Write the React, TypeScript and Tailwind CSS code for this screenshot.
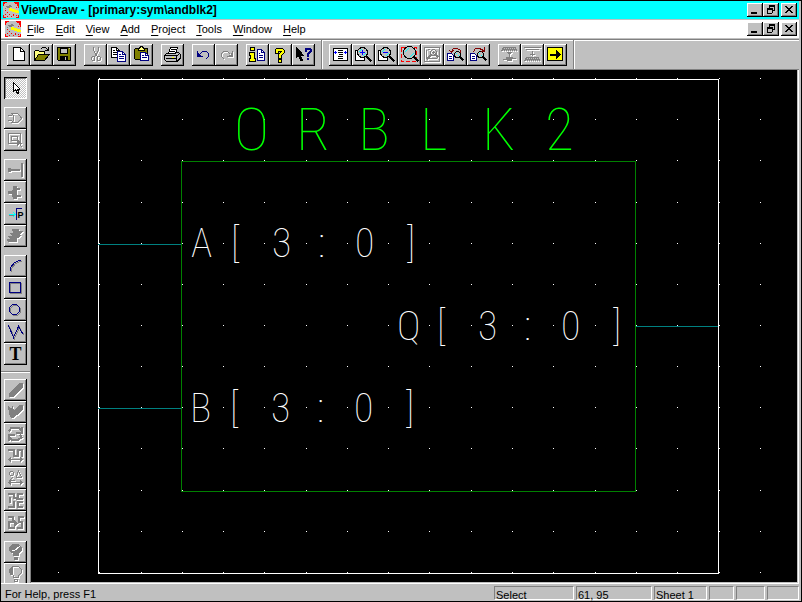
import type { ReactNode } from "react";

/* ---------- icon helpers ---------- */

function Glyph({ children }: { children: ReactNode }) {
  return (
    <svg
      viewBox="-0.5 -0.5 23 22"
      width={23}
      height={22}
      className="block"
      fill="none"
      stroke="#000"
      strokeLinecap="square"
      shapeRendering="crispEdges"
      aria-hidden="true"
    >
      {children}
    </svg>
  );
}

/* Disabled look: a white copy one pixel down-right of the grey drawing. */
function Etched({ children }: { children: ReactNode }) {
  return (
    <Glyph>
      <g transform="translate(1 1)" color="#fff" stroke="currentColor">{children}</g>
      <g color="#808080" stroke="currentColor">{children}</g>
    </Glyph>
  );
}

const Doc = ({ x, y, ink = "#000", line = "#000" }: { x: number; y: number; ink?: string; line?: string }) => (
  <g transform={`translate(${x} ${y})`}>
    <path d="M0 0H5L8 3V10H0Z" fill="#fff" stroke={ink} />
    <path d="M5 0V3H8" stroke={ink} />
    <path d="M2 3H3M2 5H6M2 7H6" stroke={line} />
  </g>
);

const Lens = ({ x, y, r = 5 }: { x: number; y: number; r?: number }) => (
  <g transform={`translate(${x} ${y})`}>
    <path d={r > 3 ? "M4 4L8 8" : "M3 3L5 5"} stroke="#000" strokeWidth="2" />
    <circle r={r} fill="#c0c0c0" stroke="#000" />
    <path d={`M${-r + 2} -1L-1 ${-r + 2}M1 ${r - 2}L${r - 2} 1`} stroke="#0ff" />
  </g>
);

const icons = {
  new: (
    <Glyph>
      <path d="M6 3H13L17 7V16H6Z" fill="#fff" />
      <path d="M13 3V7H17" />
    </Glyph>
  ),
  open: (
    <Glyph>
      <path d="M4 16V7L5 6H8L9 7H14V10" fill="#ffff80" />
      <path d="M4 16L8 10H19L14 16Z" fill="#808000" />
      <path d="M11 4L12 3H15L18 6M18 3V6H15" />
    </Glyph>
  ),
  save: (
    <Glyph>
      <path d="M4 3H17V16H5L4 15Z" fill="#808000" />
      <path d="M7 4H14V9H7Z" fill="#c0c0c0" />
      <path d="M7 12H14V15H7Z" fill="#000" />
      <path d="M12 13V15" stroke="#c0c0c0" />
      <path d="M16 4V4" stroke="#c0c0c0" />
    </Glyph>
  ),
  cut: (
    <Etched>
      <path d="M9 3V6L13 12M14 3V6L10 12M11 9V10" />
      <path d="M8 12H10V16H8L7 15V13ZM13 12H15L16 13V15L15 16H13Z" />
    </Etched>
  ),
  copy: (
    <Glyph>
      <Doc x={4} y={3} />
      <Doc x={10} y={7} ink="#000080" line="#000080" />
    </Glyph>
  ),
  paste: (
    <Glyph>
      <path d="M5 4H17V15H5L4 14V5Z" fill="#808000" />
      <path d="M8 6V4H9L10 2H12L13 4H14V6Z" fill="#ffff80" />
      <g transform="translate(10 8)">
        <path d="M0 0H5L8 3V8H0Z" fill="#fff" stroke="#000080" />
        <path d="M5 0V3H8M2 3H3M2 5H6" stroke="#000080" />
      </g>
    </Glyph>
  ),
  print: (
    <Glyph>
      <path d="M4 10L7 8H17L19 10V14L16 17H5L3 15V11Z" fill="#c0c0c0" />
      <path d="M7 9L9 3H16L14 9Z" fill="#fff" />
      <path d="M10 5H14M9 7H13" />
      <path d="M4 11H15V16M16 11L18 9M5 14H14M16 16L18 14" />
      <path d="M11 13H12" stroke="#ff0" />
    </Glyph>
  ),
  undo: (
    <Glyph>
      <path d="M5 7V12H10M6 11L7 10M6 9V11H8M8 9L10 7H14L16 9V12L14 14" stroke="#000080" />
    </Glyph>
  ),
  redo: (
    <Etched>
      <path d="M17 7V12H12M16 9V11H14M14 9L12 7H8L6 9V12L8 14" />
    </Etched>
  ),
  info: (
    <Glyph>
      <path d="M4 3H8V6H4ZM3 8H8V14H9V17H3V14H4V11H3Z" fill="#ff0" />
      <g transform="translate(11 5)">
        <path d="M0 0H4L7 3V11H0Z" fill="#fff" stroke="#000080" />
        <path d="M4 0V3H7M2 4H2M2 6H5M2 8H5" stroke="#000080" />
      </g>
    </Glyph>
  ),
  help: (
    <Glyph>
      <path d="M7 7V6L8 5H12L13 6V8L10 11V12" strokeWidth="4" />
      <path d="M10 16V16" strokeWidth="4" />
      <path d="M7 7V6L8 5H12L13 6V8L10 11V12" stroke="#ff0" strokeWidth="2" />
      <path d="M10 16V16" stroke="#ff0" strokeWidth="2" />
    </Glyph>
  ),
  whatsThis: (
    <Glyph>
      <path d="M4 3V13L6 11L8 16H10L8 11H11Z" fill="#000" />
      <path d="M13 6V5L14 4H17L18 5V7L15 10V11M15 14V14" stroke="#000080" strokeWidth="2" />
    </Glyph>
  ),
  zoomFull: (
    <Glyph>
      <path d="M4 4H18V16H4Z" fill="#fff" />
      <path d="M9 6H13M9 8H13M10 10H13M9 12H13M9 14H13" />
      <path d="M5 8H7M6 7V9M15 8H17M16 7V9" stroke="#0000ff" />
    </Glyph>
  ),
  zoomIn: (
    <Glyph>
      <path d="M3 6H12V16H3Z" fill="#fff" />
      <Lens x={10} y={8} />
      <path d="M8 8H12M10 6V10" stroke="#0000ff" />
    </Glyph>
  ),
  zoomOut: (
    <Glyph>
      <path d="M3 6H12V16H3Z" fill="#fff" />
      <Lens x={10} y={8} />
      <path d="M8 8H12" stroke="#0000ff" />
    </Glyph>
  ),
  zoomBox: (
    <Glyph>
      <path d="M3 3H18V17H3Z" stroke="#f00" strokeDasharray="4 2" strokeLinecap="butt" />
      <Lens x={11} y={8} r={6} />
    </Glyph>
  ),
  zoomSelected: (
    <Etched>
      <path d="M3 3H18V17H3Z" />
      <path d="M5 6V14H15M7 5H8" />
      <circle cx="12" cy="8" r="3" />
      <path d="M9 11L6 14M14 10L16 12" strokeWidth="2" />
      <path d="M11 8H13M12 7V9" />
    </Etched>
  ),
  pushSheet: (
    <Glyph>
      <path d="M3 9H7L9 11V16H3Z" fill="#fff" stroke="#000080" />
      <path d="M5 12H7M5 14H7" stroke="#000080" />
      <Lens x={13} y={10} r={3} />
      <path d="M7 7L9 4H13L16 6V8M5 6L7 8L9 6" stroke="#800000" />
    </Glyph>
  ),
  popSheet: (
    <Glyph>
      <path d="M3 9H7L9 11V16H3Z" fill="#fff" stroke="#000080" />
      <path d="M5 12H7M5 14H7" stroke="#000080" />
      <Lens x={13} y={10} r={3} />
      <path d="M6 7L8 4H12L16 6M17 3V7H14" stroke="#800000" />
    </Glyph>
  ),
  plugDown: (
    <Etched>
      <path d="M5 3H17L19 6H3Z" fill="currentColor" />
      <path d="M5 4H18M4 6H19" stroke="#c0c0c0" strokeDasharray="1 1" strokeLinecap="butt" />
      <path d="M9 8H13L11 10ZM11 10V12M8 13H14L13 16H9ZM5 15H8M14 14H17" fill="currentColor" />
    </Etched>
  ),
  plugUp: (
    <Etched>
      <path d="M3 3H19M5 5H17M11 7V11M9 10H13" />
      <path d="M5 13H17L19 16H3Z" fill="currentColor" />
      <path d="M5 14H18M4 16H19" stroke="#c0c0c0" strokeDasharray="1 1" strokeLinecap="butt" />
    </Etched>
  ),
  go: (
    <Glyph>
      <path d="M3 3H18V16H3Z" fill="#ff0" />
      <path d="M6 10H12" strokeWidth="2" />
      <path d="M12 6V14L16 10Z" fill="#000" />
    </Glyph>
  ),
  pointer: (
    <Glyph>
      <path d="M9 5V14L11 12L13 16H14V14L13 12H15V11Z" fill="#fff" />
    </Glyph>
  ),
  component: (
    <Etched>
      <path d="M7 6H13L16 9L17 11L16 12L13 15H7L9 13V8ZM4 8H7M4 13H7" />
    </Etched>
  ),
  block: (
    <Etched>
      <path d="M4 4H16V14H4ZM7 7H13V11H7Z" />
      <path d="M13 10V16L15 14L17 17M13 10L17 14H15" fill="currentColor" />
    </Etched>
  ),
  net: (
    <Etched>
      <path d="M5 10V11H15V10Z" />
      <path d="M4 9H6V12H4ZM17 4V17M18 4V17" fill="currentColor" />
    </Etched>
  ),
  pin: (
    <Etched>
      <path d="M9 5H12V17H9ZM8 8H8V15H8ZM12 7H15V8H12ZM12 14H16V15H12ZM4 10H8V12H4Z" fill="currentColor" />
    </Etched>
  ),
  label: (
    <Glyph>
      <path d="M5 11H11M9 9L11 11L9 13" stroke="#0ff" />
      <path d="M5 12H9" stroke="#808080" />
      <path d="M12 16V5H17" stroke="#000080" />
      <text x="13" y="14" fill="#000" stroke="none" className="font-['Liberation_Sans'] text-[9px] font-bold">P</text>
    </Glyph>
  ),
  bus: (
    <Etched>
      <path d="M8 4H14L13 6H18L15 9L16 10L12 13L12 16H4L3 14H8L4 11H9L6 8H10Z" fill="currentColor" />
    </Etched>
  ),
  arc: (
    <Glyph>
      <path d="M7 16V13L11 8L16 6H17" stroke="#808080" />
      <path d="M6 15V12L10 7L15 5H16" stroke="#000080" />
    </Glyph>
  ),
  rect: (
    <Glyph>
      <path d="M6 6H17V16H6Z" stroke="#808080" />
      <path d="M5 5H16V15H5Z" stroke="#000080" />
    </Glyph>
  ),
  circle: (
    <Glyph>
      <path d="M9 6H13L16 9V13L13 16H9L6 13V9Z" stroke="#808080" />
      <path d="M8 5H12L15 8V12L12 15H8L5 12V8Z" stroke="#000080" />
    </Glyph>
  ),
  polyline: (
    <Glyph>
      <path d="M5 5L10 17L15 6L19 13" stroke="#808080" />
      <path d="M4 4L9 16L14 5L18 12" stroke="#000080" />
    </Glyph>
  ),
  text: (
    <Glyph>
      <text x="5" y="16" fill="#000" stroke="none" className="font-['Liberation_Serif'] text-[18px] font-bold">T</text>
    </Glyph>
  ),
  line: (
    <Etched>
      <path d="M5 14L15 4H18V8L9 17H5Z" fill="currentColor" />
    </Etched>
  ),
  check: (
    <Etched>
      <path d="M4 5L7 8L8 6L9 10L15 4H18V8L9 16H7L5 12Z" fill="currentColor" />
    </Etched>
  ),
  rotate: (
    <Etched>
      <path d="M5 7L7 4H14L16 6M17 4V9H12M16 12L17 14L14 16H7L5 14M4 16V11H9" strokeWidth="2" />
    </Etched>
  ),
  flip: (
    <Etched>
      <path d="M4 4H9V10H13V4H17V10" strokeWidth="2" />
      <path d="M4 14H18M4 14L6 12V16ZM18 14L16 12V16Z" />
    </Etched>
  ),
  mirror: (
    <Etched>
      <path d="M6 4H8L9 5V7L8 8H6L5 7V5ZM14 3L12 9M14 3L17 10H12M8 10L5 13H10M4 15H18M4 15L6 13V17ZM18 15L16 13V17Z" />
    </Etched>
  ),
  swapDown: (
    <Etched>
      <path d="M4 4H9V8H13V4H17M17 9H12M5 8V12M4 17H9V12M17 12H13V17H17" strokeWidth="2" />
    </Etched>
  ),
  swapAcross: (
    <Etched>
      <path d="M4 5H8V10H4V16H9M18 5H14V10H17V16H13" strokeWidth="2" />
      <path d="M10 9L13 12L10 15Z" fill="currentColor" />
    </Etched>
  ),
  bulbOff: (
    <Etched>
      <path d="M8 3H14L17 6V9L14 12V14H9V12L5 9V6ZM10 16H13V18H10Z" fill="currentColor" />
      <path d="M8 9H10L15 5" stroke="#fff" />
    </Etched>
  ),
  bulbOn: (
    <Etched>
      <path d="M8 3H14L17 6V9L14 12V14H9V12L5 9V6ZM10 16H13V18H10Z" />
      <path d="M8 4V11H6V6Z" fill="currentColor" />
    </Etched>
  ),
};

type IconName = keyof typeof icons;
type Tool = { icon: IconName; name: string; disabled?: boolean; pressed?: boolean };

const standardTools: Tool[][] = [
  [
    { icon: "new", name: "New" },
    { icon: "open", name: "Open" },
    { icon: "save", name: "Save" },
  ],
  [
    { icon: "cut", name: "Cut", disabled: true },
    { icon: "copy", name: "Copy" },
    { icon: "paste", name: "Paste" },
  ],
  [{ icon: "print", name: "Print" }],
  [
    { icon: "undo", name: "Undo" },
    { icon: "redo", name: "Redo", disabled: true },
  ],
  [
    { icon: "info", name: "Information" },
    { icon: "help", name: "Help topics" },
    { icon: "whatsThis", name: "Context help" },
  ],
];

const viewTools: Tool[][] = [
  [
    { icon: "zoomFull", name: "View full" },
    { icon: "zoomIn", name: "Zoom in" },
    { icon: "zoomOut", name: "Zoom out" },
    { icon: "zoomBox", name: "Zoom region" },
    { icon: "zoomSelected", name: "Zoom selected", disabled: true },
    { icon: "pushSheet", name: "Previous view" },
    { icon: "popSheet", name: "Next view" },
  ],
  [
    { icon: "plugDown", name: "Push", disabled: true },
    { icon: "plugUp", name: "Pop", disabled: true },
    { icon: "go", name: "Go" },
  ],
];

const drawTools: Tool[][] = [
  [{ icon: "pointer", name: "Select", pressed: true }],
  [
    { icon: "component", name: "Component", disabled: true },
    { icon: "block", name: "Block", disabled: true },
  ],
  [
    { icon: "net", name: "Net", disabled: true },
    { icon: "pin", name: "Bus", disabled: true },
    { icon: "label", name: "Pin" },
    { icon: "bus", name: "Slice", disabled: true },
  ],
  [
    { icon: "arc", name: "Arc" },
    { icon: "rect", name: "Box" },
    { icon: "circle", name: "Circle" },
    { icon: "polyline", name: "Line" },
    { icon: "text", name: "Text" },
  ],
];

const editTools: Tool[][] = [
  [
    { icon: "line", name: "Color", disabled: true },
    { icon: "check", name: "Style", disabled: true },
    { icon: "rotate", name: "Rotate", disabled: true },
    { icon: "flip", name: "Stretch", disabled: true },
    { icon: "mirror", name: "Scale", disabled: true },
    { icon: "swapDown", name: "Reflect", disabled: true },
    { icon: "swapAcross", name: "Mirror", disabled: true },
  ],
  [
    { icon: "bulbOff", name: "Hide", disabled: true },
    { icon: "bulbOn", name: "Show", disabled: true },
  ],
];

function ToolButton({ icon, name, disabled, pressed }: Tool) {
  return (
    <button
      type="button"
      aria-label={name}
      aria-pressed={pressed}
      disabled={disabled}
      className={
        pressed
          ? "h-[22px] w-[23px] shrink-0 bg-[repeating-conic-gradient(#fff_0_25%,#c0c0c0_0_50%)] bg-size-[2px_2px] shadow-[inset_1px_1px_#000,inset_-1px_-1px_#fff,inset_2px_2px_#808080]"
          : "h-[22px] w-[23px] shrink-0 bg-[#c0c0c0] shadow-[inset_-1px_-1px_#000,inset_1px_1px_#fff,inset_-2px_-2px_#808080]"
      }
    >
      {icons[icon]}
    </button>
  );
}

function ToolStrip({ groups, label }: { groups: Tool[][]; label: string }) {
  return (
    <div role="toolbar" aria-label={label} className="flex gap-2 border-r border-[#808080] px-[6px] pt-1 pb-[3px]">
      {groups.map((group) => (
        <div key={group[0].icon} className="flex">
          {group.map((tool) => (
            <ToolButton key={tool.icon} {...tool} />
          ))}
        </div>
      ))}
    </div>
  );
}

function SideStrip({ groups, label }: { groups: Tool[][]; label: string }) {
  return (
    <div role="toolbar" aria-label={label} className="flex flex-col gap-2 border-t border-white px-[3px] py-[6px]">
      {groups.map((group) => (
        <div key={group[0].icon} className="flex flex-col">
          {group.map((tool) => (
            <ToolButton key={tool.icon} {...tool} />
          ))}
        </div>
      ))}
    </div>
  );
}

/* ---------- window chrome ---------- */

function AppMark() {
  return (
    <svg viewBox="0 0 16 16" width={16} height={16} shapeRendering="crispEdges" aria-hidden="true">
      <path d="M0 0H16V16H0Z" fill="#c0c0c0" />
      <path d="M0 0H4V1H2V2H1V4H0ZM11 0H16V6H15V4H14V2H12V1H11ZM0 13H1V15H3V16H0ZM13 16V15H15V13H16V16Z" fill="#f00" />
      <path d="M2 8H3V9H2ZM4 10H5V11H4ZM2 12H3V13H2ZM6 12H7V13H6ZM4 14H5V15H4ZM8 14H9V15H8ZM10 12H11V14H10ZM13 13H14V14H13ZM13 5H14V6H13Z" fill="#f00" />
      <path d="M3 4H6V3H8V4H9V5H7V6H4V5H3ZM2 6H3V7H2Z" fill="#808080" />
      <path d="M6 6H9V7H12V8H15V9H16V11H12V10H9V9H6Z" fill="#ff0" />
    </svg>
  );
}

const captionGlyphs = {
  Minimize: <path d="M4 9H10V11H4Z" />,
  Restore: <path d="M6 2H12V8H10V10H9V11H4V5H6ZM7 4V5H10V7H11V4ZM5 7V10H9V7Z" fillRule="evenodd" />,
  Close: <path d="M4 3H6V4H7V5H9V4H10V3H12V4H11V5H10V6H9V7H10V8H11V9H12V10H10V9H9V8H7V9H6V10H4V9H5V8H6V7H7V6H6V5H5V4H4Z" />,
};

function CaptionButton({ name, owner }: { name: keyof typeof captionGlyphs; owner: string }) {
  return (
    <button
      type="button"
      aria-label={`${name} ${owner}`}
      className="h-[14px] w-4 bg-[#c0c0c0] shadow-[inset_-1px_-1px_#000,inset_1px_1px_#fff,inset_-2px_-2px_#808080]"
    >
      <svg viewBox="0 0 16 14" width={16} height={14} className="block" shapeRendering="crispEdges" aria-hidden="true">
        {captionGlyphs[name]}
      </svg>
    </button>
  );
}

function CaptionButtons({ owner }: { owner: string }) {
  return (
    <div className="ml-auto flex items-center gap-[2px]">
      <div className="flex">
        <CaptionButton name="Minimize" owner={owner} />
        <CaptionButton name="Restore" owner={owner} />
      </div>
      <CaptionButton name="Close" owner={owner} />
    </div>
  );
}

const menus = ["File", "Edit", "View", "Add", "Project", "Tools", "Window", "Help"];

/* ---------- schematic ---------- */

const gridX = [58, 99, 141, 182, 223, 264, 306, 347, 388, 429, 471, 512, 553, 595, 636, 677, 719, 760];
const gridY = [78, 119, 160, 202, 243, 284, 325, 366, 407, 448, 490, 531, 572];

/* Left edge of each character, measured from the start of the label. */
const titleCells = [0, 62, 124, 186, 248, 311];
const pinCells = [0, 40, 81, 127, 164, 216];

const cells = (offsets: number[], x: number) => offsets.map((offset) => x + offset).join(" ");

const pinNames = [
  { text: "A[3:0]", x: 191, y: 257 },
  { text: "Q[3:0]", x: 397, y: 340 },
  { text: "B[3:0]", x: 190, y: 422 },
];

function Sheet() {
  return (
    <svg
      viewBox="31 70 766 512"
      className="block h-full w-full font-['Roboto_Condensed','Roboto',sans-serif] font-thin"
      role="img"
      aria-label="Symbol sheet"
    >
      <g fill="none" shapeRendering="crispEdges">
        <path d="M98.5 79.5H718.5V573.5H98.5Z" stroke="#fff" />
        <path d="M98 244.5H181M98 408.5H181M636 326.5H718" stroke="#008080" />
        <path d="M181.5 161.5H635.5V491.5H181.5Z" stroke="#008000" />
      </g>
      <g fill="#fff" shapeRendering="crispEdges">
        {gridY.map((y) => gridX.map((x) => <rect key={`${x}-${y}`} x={x} y={y} width="1" height="1" />))}
      </g>
      <text x={cells(titleCells, 234)} y="150" fill="#0f0" className="text-[60px]">
        ORBLK2
      </text>
      {pinNames.map((pin) => (
        <text key={pin.text} x={cells(pinCells, pin.x)} y={pin.y} fill="#fff" className="text-[40px]">
          {pin.text}
        </text>
      ))}
    </svg>
  );
}

const statusCell = "h-[14px] border border-t-[#808080] border-r-white border-b-white border-l-[#808080] pl-px leading-4";

export default function App() {
  return (
    <div className="flex h-screen w-full flex-col overflow-hidden border border-black bg-[#c0c0c0] pr-[2px] font-['Liberation_Sans',Arial,sans-serif] text-[11px] text-black">
      <header className="flex h-[18px] shrink-0 items-center bg-[#00ffff] pr-[2px] pl-[2px]">
        <AppMark />
        <h1 className="pl-[2px] text-[12px] leading-[18px] font-bold whitespace-pre">ViewDraw - [primary:sym\andblk2]</h1>
        <CaptionButtons owner="ViewDraw" />
      </header>

      <nav aria-label="Menu" className="mt-px flex h-[18px] shrink-0 items-center bg-white pr-[2px] pl-1">
        <AppMark />
        <div className="flex gap-[11px] pl-[6px] text-[11px] leading-[18px]">
          {menus.map((menu) => (
            <button key={menu} type="button">
              <span className="underline underline-offset-2">{menu[0]}</span>
              {menu.slice(1)}
            </button>
          ))}
        </div>
        <CaptionButtons owner="document" />
      </nav>

      <div className="mt-px flex shrink-0 border-y border-[#808080] shadow-[inset_0_1px_#fff]">
        <ToolStrip groups={standardTools} label="Standard" />
        <div className="flex border-l border-white">
          <ToolStrip groups={viewTools} label="View" />
        </div>
        <div className="flex-1 border-l border-white" />
      </div>

      <main className="flex min-h-0 flex-1">
        <aside className="flex shrink-0 flex-col overflow-hidden border-r border-[#808080]">
          <SideStrip groups={drawTools} label="Draw" />
          <div className="flex flex-col border-t border-[#808080]">
            <SideStrip groups={editTools} label="Edit" />
          </div>
        </aside>
        <div className="min-w-0 flex-1 border-r border-b border-[#c0c0c0] bg-black">
          <Sheet />
        </div>
        <div className="w-px bg-white" />
      </main>

      <footer className="flex h-[18px] shrink-0 items-start gap-[2px] border-t border-white pt-[2px] text-[11px]">
        <p className="flex-1 pl-1 leading-[17px]">For Help, press F1</p>
        <p className={`${statusCell} w-[80px]`}>Select</p>
        <p className={`${statusCell} w-[76px]`}>61, 95</p>
        <p className={`${statusCell} w-[53px]`}>Sheet 1</p>
        <p className={`${statusCell} w-[25px]`} />
        <p className={`${statusCell} w-[29px]`} />
        <p className={`${statusCell} w-[32px]`} />
      </footer>
    </div>
  );
}
